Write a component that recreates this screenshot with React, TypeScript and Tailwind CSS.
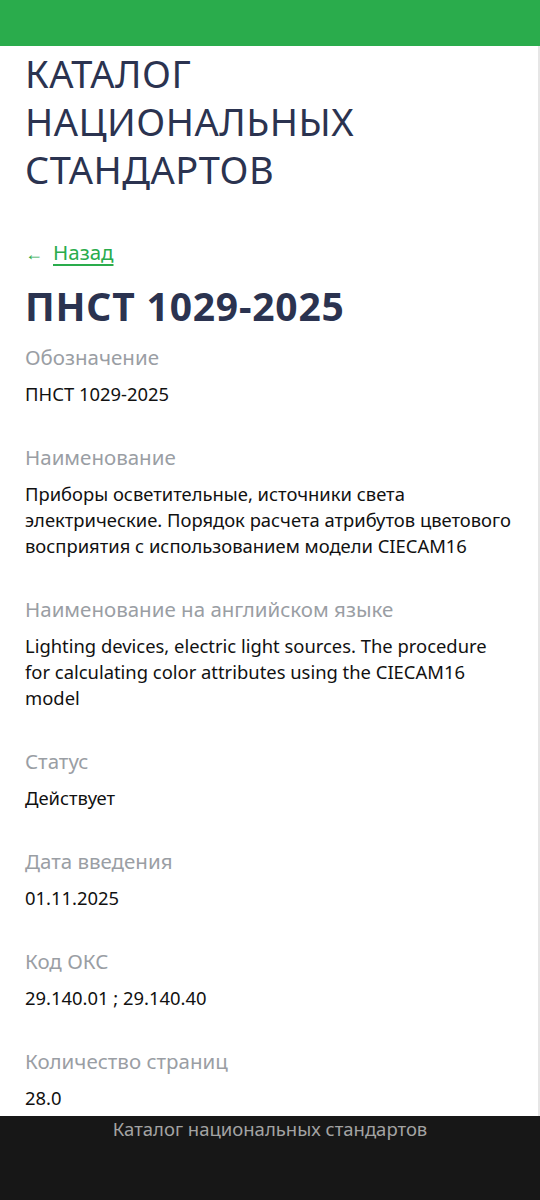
const rows: { label: string; value: string }[] = [
  { label: 'Обозначение', value: 'ПНСТ 1029-2025' },
  {
    label: 'Наименование',
    value:
      'Приборы осветительные, источники света электрические. Порядок расчета атрибутов цветового восприятия с использованием модели CIECAM16',
  },
  {
    label: 'Наименование на английском языке',
    value:
      'Lighting devices, electric light sources. The procedure for calculating color attributes using the CIECAM16 model',
  },
  { label: 'Статус', value: 'Действует' },
  { label: 'Дата введения', value: '01.11.2025' },
  { label: 'Код ОКС', value: '29.140.01 ; 29.140.40' },
  { label: 'Количество страниц', value: '28.0' },
];

export default function App() {
  return (
    <div className="flex min-h-[1200px] w-[540px] flex-col bg-white font-['Noto_Sans',sans-serif]">
      <div className="h-[46px] bg-[#2aac4c]" />
      <main className="flex-1 border-r-2 border-[#e6e6e6] pb-[5px] pl-[25px] pr-[25px]">
        <h1 className="pt-[3px] text-[38px] font-normal uppercase leading-[48px] tracking-[0.5px] text-[#2b3350]">
          Каталог
          <br />
          национальных
          <br />
          стандартов
        </h1>
        <a href="#" className="mt-[46px] block text-[20.5px] leading-[26px] text-[#2aac4c]">
          <span className="mr-[10px] text-[18px]">←</span>
          <span className="underline decoration-[1.5px] underline-offset-[4px]">Назад</span>
        </a>
        <h2 className="mt-[18px] text-[39px] font-bold leading-[44px] tracking-[0.8px] text-[#2b3350]">
          ПНСТ 1029-2025
        </h2>
        <dl className="mt-[15px] flex flex-col">
          {rows.map((r, i) => (
            <div key={r.label} className={i === 0 ? '' : 'mt-[36px]'}>
              <dt className="text-[20.5px] leading-[28px] text-[#9a9ea4]">{r.label}</dt>
              <dd className="mt-[10px] text-[18.4px] leading-[26px] text-[#111]">{r.value}</dd>
            </div>
          ))}
        </dl>
      </main>
      <footer className="h-[85px] bg-[#171717] pt-[1px] text-center text-[18.5px] leading-[24px] text-[#a3a3a3]">
        Каталог национальных стандартов
      </footer>
    </div>
  );
}
